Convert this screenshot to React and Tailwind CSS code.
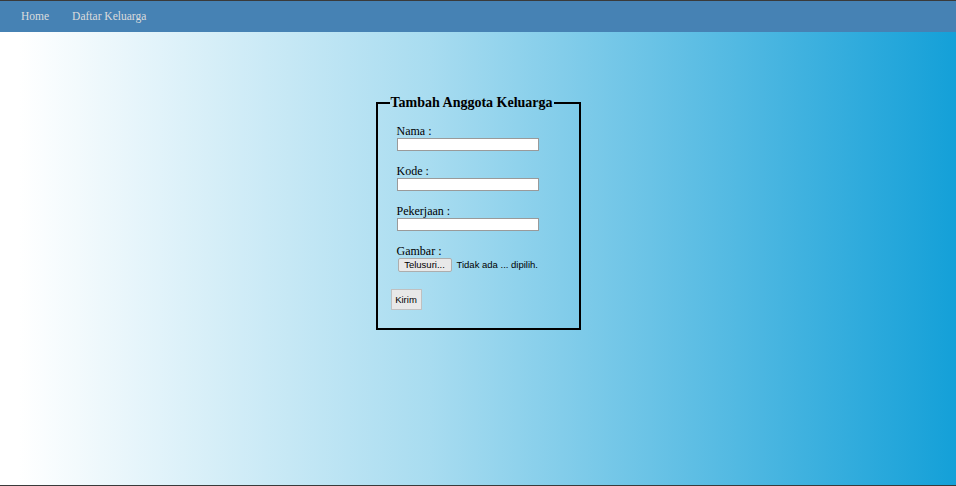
export default function App() {
  const serif = { fontFamily: '"Liberation Serif", "Times New Roman", serif' }
  const sans = { fontFamily: '"Liberation Sans", Arial, sans-serif' }
  const fields = ['Nama', 'Kode', 'Pekerjaan']

  return (
    <div className="h-[486px] flex flex-col bg-[#3a3a3a] overflow-hidden" style={serif}>
      <nav className="mt-px h-[31px] bg-[#4682b4] flex items-center pl-[21px] gap-[23px] text-[11.5px] text-[#dcdcdc]">
        <a href="#">Home</a>
        <a href="#">Daftar Keluarga</a>
      </nav>
      <main className="flex-1 mb-px bg-[linear-gradient(to_right,#ffffff_2%,#a8dcf0_45%,#14a0d8_100%)]">
        <fieldset className="mx-auto mt-[62px] w-[205px] border-2 border-black pl-[13px] pr-3 pb-[18px]">
          <legend className="-ml-px px-px text-[14px] font-bold text-black leading-[18px]">Tambah Anggota Keluarga</legend>
          <div className="pl-[6px] pt-[13px]">
            {fields.map((f) => (
              <div key={f} className="mb-[14px]">
                <label className="block text-[12px] leading-[13px] text-black">{f} :</label>
                <input
                  type="text"
                  className="block w-[142px] h-[13px] bg-white border border-[#9a9a9a] outline-none"
                />
              </div>
            ))}
            <div>
              <label className="block text-[12px] leading-[13px] text-black">Gambar :</label>
              <div className="flex items-center gap-[5px] text-[9.5px] text-black" style={sans}>
                <span className="ml-px w-[54px] h-[14px] flex items-center justify-center bg-[#e8e8e8] border border-[#adadad] rounded-[2px]">
                  Telusuri...
                </span>
                <span>Tidak ada ... dipilih.</span>
              </div>
            </div>
          </div>
          <button
            className="mt-[17px] w-[31px] h-[21px] flex items-center justify-center bg-[#e8e8e8] border border-[#c0c0c0] text-[9.5px] text-black"
            style={sans}
          >
            Kirim
          </button>
        </fieldset>
      </main>
    </div>
  )
}
